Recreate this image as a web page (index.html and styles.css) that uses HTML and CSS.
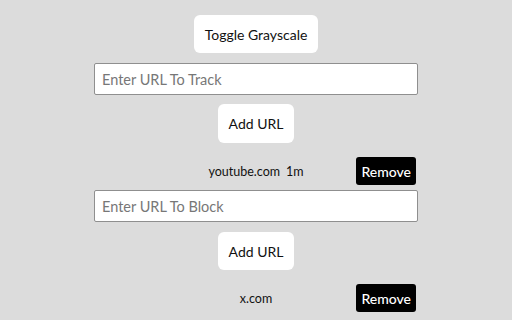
FILE: index.html
```html
<!DOCTYPE html>
<html>
<head>
<meta charset="utf-8">
<link rel="stylesheet" href="styles.css">
</head>
<body>
<div class="app">
  <button class="btn toggle">Toggle Grayscale</button>
  <input class="url" type="text" placeholder="Enter URL To Track">
  <button class="btn add">Add URL</button>
  <div class="row">
    <span class="site"><span>youtube.com</span><span>1m</span></span>
    <button class="remove">Remove</button>
  </div>
  <input class="url" type="text" placeholder="Enter URL To Block">
  <button class="btn add add2">Add URL</button>
  <div class="row row2">
    <span class="site"><span>x.com</span></span>
    <button class="remove">Remove</button>
  </div>
</div>
</body>
</html>
```
FILE: styles.css
```css
html, body {
  margin: 0;
  padding: 0;
  background: #dcdcdc;
}
body {
  font-family: "Lato", "Liberation Sans", sans-serif;
  color: #111;
}
.app {
  display: flex;
  flex-direction: column;
  align-items: center;
  padding-top: 15px;
}
.btn {
  background: #fff;
  border: none;
  border-radius: 6px;
  font-family: inherit;
  font-size: 14px;
  color: #111;
  padding: 0 11px;
  cursor: pointer;
}
.toggle {
  height: 38px;
  margin-bottom: 10px;
}
.url {
  box-sizing: border-box;
  width: 324px;
  height: 32px;
  border: 1px solid #8f8f8f;
  border-radius: 2px;
  background: #fff;
  font-family: inherit;
  font-size: 14.5px;
  padding: 0 7px;
  margin: 0;
}
.url::placeholder {
  color: #777;
}
.add {
  height: 39px;
  margin-top: 9px;
  margin-bottom: 14px;
  padding: 0 11px;
}
.add2 {
  margin-top: 10px;
  height: 38px;
  margin-bottom: 14px;
}
.row {
  width: 324px;
  height: 28px;
  display: grid;
  grid-template-columns: 1fr auto 1fr;
  align-items: center;
  margin-bottom: 5px;
}
.site {
  grid-column: 2;
  font-size: 12.5px;
  display: flex;
  gap: 6px;
}
.remove {
  grid-column: 3;
  justify-self: end;
  margin-right: 2px;
  height: 28px;
  background: #000;
  color: #fff;
  border: none;
  border-radius: 3px;
  font-family: inherit;
  font-size: 14px;
  font-weight: 500;
  padding: 0 5px;
}
```
